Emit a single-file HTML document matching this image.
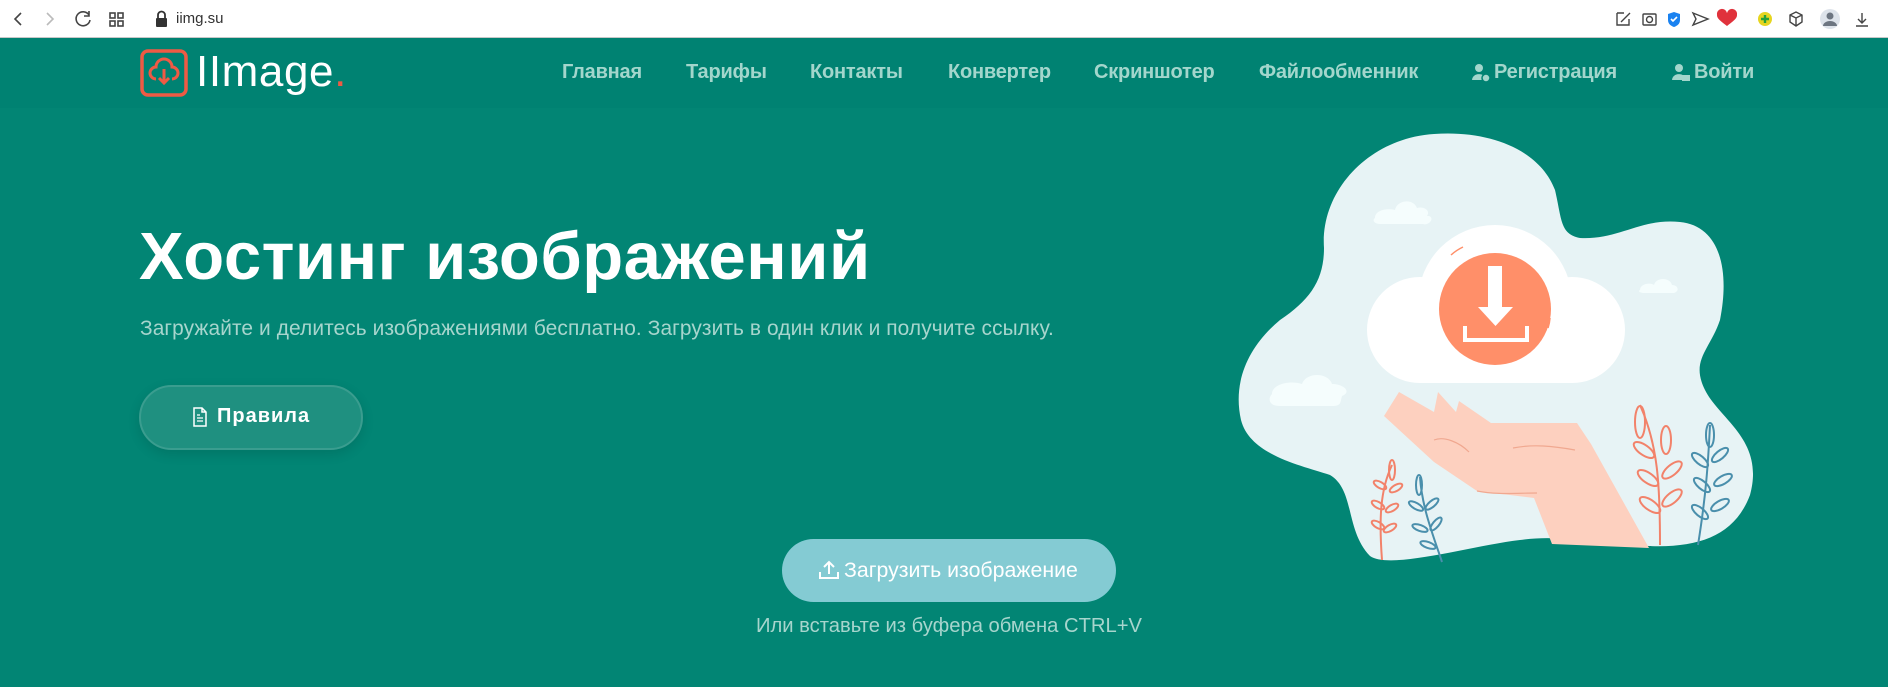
<!DOCTYPE html>
<html><head><meta charset="utf-8"><style>
*{margin:0;padding:0;box-sizing:border-box}
body{width:1888px;height:687px;overflow:hidden;background:#028574;font-family:"Liberation Sans","DejaVu Sans",sans-serif;position:relative}
.bar{position:absolute;left:0;top:0;width:1888px;height:38px;background:#fff;border-bottom:1px solid #c8c8c8}
.nav{position:absolute;left:0;top:38px;width:1888px;height:70px;background:#008272}
.abs{position:absolute;white-space:nowrap}
.nl{position:absolute;top:61px;font-size:20px;font-weight:bold;color:#a3d6cc;letter-spacing:-0.2px}
</style></head><body>
<div class="bar">
<svg class="abs" style="left:0;top:0" width="1888" height="38">
<g fill="none" stroke="#444" stroke-width="1.6">
<path d="M21 13l-6 6 6 6"/>
<path d="M47 13l6 6-6 6" stroke="#bbb"/>
<path d="M89 15a7 7 0 1 0 1 5M89 11v5h-5"/>
<rect x="110" y="13" width="5" height="5"/><rect x="118" y="13" width="5" height="5"/><rect x="110" y="21" width="5" height="5"/><rect x="118" y="21" width="5" height="5"/>
</g>
<rect x="156" y="18" width="11" height="9" rx="1" fill="#333"/><path d="M158 18v-3a3.5 3.5 0 0 1 7 0v3" fill="none" stroke="#333" stroke-width="1.8"/>
<g fill="none" stroke="#444" stroke-width="1.4">
<path d="M1617 13h7M1617 13v12h12v-6M1621 22l9-9"/>
<rect x="1643" y="14" width="13" height="11" rx="1"/><circle cx="1649.5" cy="19.5" r="3"/>
<path d="M1693 13l15 6-15 6 3-6z"/>
<path d="M1790 15l6-3 6 3v7l-6 4-6-4zM1790 15l6 3 6-3M1796 18v8"/>
<path d="M1862 13v10M1858 19l4 4 4-4M1856 26h12"/>
</g>
<path d="M1674 12l6 2v6c0 4-3 6-6 7-3-1-6-3-6-7v-6z" fill="#1a82f0"/><path d="M1671 19l2 2 4-4" stroke="#fff" stroke-width="1.6" fill="none"/>
<path d="M1727 26c-8-6-10-8-10-11a4 4 0 0 1 10-2 4 4 0 0 1 10 2c0 3-2 5-10 11z" fill="#e0323c"/>
<circle cx="1765" cy="19" r="7" fill="#e6d51f"/><path d="M1765 15v8M1761 19h8" stroke="#26a03a" stroke-width="2.4"/>
<circle cx="1830" cy="19" r="10" fill="#dde3ea"/><circle cx="1830" cy="16" r="3.5" fill="#6d7681"/><path d="M1823 26a7 5 0 0 1 14 0z" fill="#6d7681"/>
</svg>
<div class="abs" style="left:176px;top:10px;font-size:15px;color:#333">iimg.su</div>
</div>
<div class="nav"></div>
<svg class="abs" style="left:140px;top:49px" width="48" height="48" viewBox="0 0 48 48">
<rect x="2" y="2" width="44" height="44" rx="6" fill="none" stroke="#ef5a44" stroke-width="3.5"/>
<path d="M16 30a6 6 0 0 1 0-12 8 8 0 0 1 16 0 6 6 0 0 1 0 12" fill="none" stroke="#ef5a44" stroke-width="3"/>
<path d="M24 20v14M19 29l5 5 5-5" fill="none" stroke="#ef5a44" stroke-width="3"/>
</svg>
<div class="abs" style="left:196px;top:47px;font-size:44px;color:#fff;letter-spacing:0.6px">IImage<span style="color:#ef5a44">.</span></div>
<div class="nl" style="left:562px">Главная</div>
<div class="nl" style="left:686px">Тарифы</div>
<div class="nl" style="left:810px">Контакты</div>
<div class="nl" style="left:948px">Конвертер</div>
<div class="nl" style="left:1094px">Скриншотер</div>
<div class="nl" style="left:1259px">Файлообменник</div>
<svg class="abs" style="left:1471px;top:63px" width="20" height="20"><circle cx="8" cy="5" r="4" fill="#a3d6cc"/><path d="M1 17a7 6 0 0 1 13-3v3z" fill="#a3d6cc"/><circle cx="15" cy="15" r="4" fill="#a3d6cc" stroke="#008272" stroke-width="1.5"/></svg>
<div class="nl" style="left:1494px">Регистрация</div>
<svg class="abs" style="left:1671px;top:63px" width="20" height="20"><circle cx="8" cy="5" r="4" fill="#a3d6cc"/><path d="M1 17a7 6 0 0 1 13-3v3z" fill="#a3d6cc"/><rect x="11" y="12" width="8" height="6" fill="#a3d6cc"/></svg>
<div class="nl" style="left:1694px">Войти</div>

<div class="abs" style="left:139px;top:218px;font-size:67px;font-weight:bold;color:#fff;letter-spacing:0.5px">Хостинг изображений</div>
<div class="abs" style="left:140px;top:317px;font-size:20.9px;color:#a7d5cd;letter-spacing:0.1px">Загружайте и делитесь изображениями бесплатно. Загрузить в один клик и получите ссылку.</div>
<div class="abs" style="left:139px;top:385px;width:224px;height:65px;border-radius:33px;background:#1f9080;border:2px solid #3a9d8f;box-shadow:0 4px 12px rgba(0,0,0,0.12)"></div>
<svg class="abs" style="left:192px;top:407px" width="16" height="20"><path d="M2 1h8l4 4v14H2z M10 1v4h4" fill="none" stroke="#fff" stroke-width="1.5"/><path d="M5 11h6M5 14h6M5 8h3" stroke="#fff" stroke-width="1.3"/></svg>
<div class="abs" style="left:217px;top:405px;font-size:20px;font-weight:bold;color:#fff;letter-spacing:1px">Правила</div>

<div class="abs" style="left:782px;top:539px;width:334px;height:63px;border-radius:32px;background:#84cbd3"></div>
<svg class="abs" style="left:818px;top:559px" width="22" height="22"><path d="M11 15V3M6 8l5-5 5 5M2 13v6h18v-6" fill="none" stroke="#fff" stroke-width="2"/></svg>
<div class="abs" style="left:844px;top:558px;font-size:21.3px;color:#fff">Загрузить изображение</div>
<div class="abs" style="left:756px;top:615px;font-size:20.2px;color:#a7d5cd">Или вставьте из буфера обмена CTRL+V</div>

<svg class="abs" style="left:1220px;top:130px" width="560" height="440" viewBox="0 0 560 440">
<path d="M104 118C100 60 150 8 214 4C270 0 320 20 335 60C342 90 340 104 360 108C400 110 420 88 460 92C500 96 510 140 500 190C490 220 470 230 485 260C500 290 545 310 530 365C515 405 480 418 429 416C380 414 340 404 300 410C250 416 170 440 150 426C125 400 135 360 110 345C80 335 30 325 21 290C12 250 30 215 60 190C90 170 104 150 104 118Z" fill="#e7f3f5"/>
<g fill="#f5fdfd"><path d="M155 88c0-8 12-10 20-8 2-10 18-12 22-2 6-2 14 2 10 8h2c6 2 0 10-6 8H160c-6 0-8-4-5-6z"/><path d="M420 160c0-6 10-8 14-5 2-8 16-8 18 0 6 0 8 6 2 8H425c-6 0-7-2-5-3z"/><path d="M52 264c0-10 18-14 30-10 4-12 26-12 30 0 12 0 20 8 10 12-2 6 0 10-10 10H60c-12 0-12-8-8-12z"/></g>
<circle cx="200" cy="200" r="53" fill="#fff"/><circle cx="352" cy="200" r="53" fill="#fff"/><circle cx="275" cy="172" r="77" fill="#fff"/><rect x="200" y="175" width="152" height="78" fill="#fff"/>
<circle cx="275" cy="179" r="56" fill="#ff8f69"/>
<path d="M268 136h14v42h-14z" fill="#fff"/><path d="M258 177h35l-17.5 19z" fill="#fff"/>
<path d="M245 196v14h62v-14" fill="none" stroke="#fff" stroke-width="4"/>
<path d="M231 125a50 50 0 0 1 12-8M330 188a40 40 0 0 1-2 10" stroke="#ff8f69" stroke-width="1.5" fill="none"/>
<path d="M164 286L179 262L214 282L218 262L236 282L239 271L271 293L357 293L371 314L429 418L332 414L314 368L257 361L214 332Z" fill="#fdd0bf"/>
<path d="M214 310c10-4 25 2 35 12M293 318c20-4 40-2 62 2M257 361c20 4 40 2 60 2" stroke="#f0a890" stroke-width="1.2" fill="none"/>
<g fill="none" stroke-width="2">
<g stroke="#f2826a"><path d="M162 430c-3-40-2-70 10-95"/><ellipse cx="172" cy="340" rx="3" ry="10"/><ellipse cx="160" cy="355" rx="7" ry="3" transform="rotate(30 160 355)"/><ellipse cx="176" cy="358" rx="7" ry="3" transform="rotate(-30 176 358)"/><ellipse cx="158" cy="375" rx="7" ry="3" transform="rotate(30 158 375)"/><ellipse cx="172" cy="378" rx="7" ry="3" transform="rotate(-30 172 378)"/><ellipse cx="158" cy="395" rx="7" ry="3" transform="rotate(30 158 395)"/><ellipse cx="170" cy="398" rx="7" ry="3" transform="rotate(-30 170 398)"/>
<path d="M440 415c0-60-2-100-20-140"/><ellipse cx="420" cy="292" rx="5" ry="16"/><ellipse cx="424" cy="320" rx="12" ry="5" transform="rotate(35 424 320)"/><ellipse cx="446" cy="310" rx="5" ry="14"/><ellipse cx="428" cy="348" rx="12" ry="5" transform="rotate(35 428 348)"/><ellipse cx="452" cy="340" rx="12" ry="5" transform="rotate(-40 452 340)"/><ellipse cx="430" cy="375" rx="12" ry="5" transform="rotate(35 430 375)"/><ellipse cx="452" cy="368" rx="12" ry="5" transform="rotate(-40 452 368)"/></g>
<g stroke="#4a8fac"><path d="M222 432c-10-30-20-55-22-85"/><ellipse cx="199" cy="355" rx="3" ry="10"/><ellipse cx="196" cy="376" rx="8" ry="3" transform="rotate(30 196 376)"/><ellipse cx="212" cy="374" rx="8" ry="3" transform="rotate(-40 212 374)"/><ellipse cx="200" cy="398" rx="8" ry="3" transform="rotate(20 200 398)"/><ellipse cx="216" cy="394" rx="8" ry="3" transform="rotate(-50 216 394)"/><ellipse cx="208" cy="415" rx="8" ry="3" transform="rotate(20 208 415)"/>
<path d="M478 415c8-50 10-80 12-120"/><ellipse cx="490" cy="305" rx="4" ry="12"/><ellipse cx="480" cy="330" rx="10" ry="4" transform="rotate(40 480 330)"/><ellipse cx="500" cy="325" rx="10" ry="4" transform="rotate(-40 500 325)"/><ellipse cx="482" cy="355" rx="10" ry="4" transform="rotate(40 482 355)"/><ellipse cx="503" cy="350" rx="10" ry="4" transform="rotate(-30 503 350)"/><ellipse cx="480" cy="382" rx="10" ry="4" transform="rotate(40 480 382)"/><ellipse cx="500" cy="375" rx="10" ry="4" transform="rotate(-30 500 375)"/></g>
</g>
</svg>
</body></html>
